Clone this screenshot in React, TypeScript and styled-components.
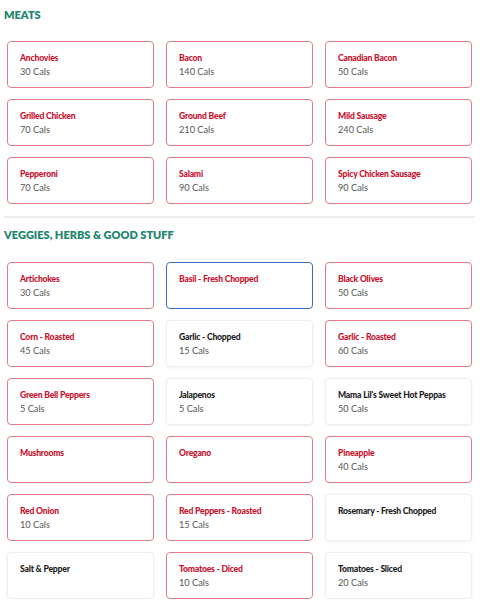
import React from "react";
import styled, { createGlobalStyle } from "styled-components";

const Global = createGlobalStyle`
  html, body { margin: 0; padding: 0; background: #fff; }
  body { font-family: Lato, "Noto Sans", sans-serif; }
`;

type State = "on" | "focus" | "off";
type Item = { name: string; cals?: number; state: State };

const meats: Item[] = [
  { name: "Anchovies", cals: 30, state: "on" },
  { name: "Bacon", cals: 140, state: "on" },
  { name: "Canadian Bacon", cals: 50, state: "on" },
  { name: "Grilled Chicken", cals: 70, state: "on" },
  { name: "Ground Beef", cals: 210, state: "on" },
  { name: "Mild Sausage", cals: 240, state: "on" },
  { name: "Pepperoni", cals: 70, state: "on" },
  { name: "Salami", cals: 90, state: "on" },
  { name: "Spicy Chicken Sausage", cals: 90, state: "on" },
];

const veggies: Item[] = [
  { name: "Artichokes", cals: 30, state: "on" },
  { name: "Basil - Fresh Chopped", state: "focus" },
  { name: "Black Olives", cals: 50, state: "on" },
  { name: "Corn - Roasted", cals: 45, state: "on" },
  { name: "Garlic - Chopped", cals: 15, state: "off" },
  { name: "Garlic - Roasted", cals: 60, state: "on" },
  { name: "Green Bell Peppers", cals: 5, state: "on" },
  { name: "Jalapenos", cals: 5, state: "off" },
  { name: "Mama Lil's Sweet Hot Peppas", cals: 50, state: "off" },
  { name: "Mushrooms", state: "on" },
  { name: "Oregano", state: "on" },
  { name: "Pineapple", cals: 40, state: "on" },
  { name: "Red Onion", cals: 10, state: "on" },
  { name: "Red Peppers - Roasted", cals: 15, state: "on" },
  { name: "Rosemary - Fresh Chopped", state: "off" },
  { name: "Salt & Pepper", state: "off" },
  { name: "Tomatoes - Diced", cals: 10, state: "on" },
  { name: "Tomatoes - Sliced", cals: 20, state: "off" },
];

const Page = styled.div`
  padding: 0 8px 0 7px;
`;

const Heading = styled.h2`
  margin: 0 0 0 -3px;
  padding-top: 8px;
  height: 41px;
  box-sizing: border-box;
  font-size: 11px;
  font-weight: 800;
  color: #21856f;
  line-height: 14px;
`;

const SecondHeading = styled(Heading)`
  padding-top: 10px;
  height: 44px;
`;

const Grid = styled.div`
  display: grid;
  grid-template-columns: repeat(3, 147px);
  column-gap: 12px;
  row-gap: 11px;
`;

const Divider = styled.hr`
  margin: 12px -3px 0 -3px;
  border: none;
  border-top: 2px solid #ededed;
`;

const borderFor = (s: State) =>
  s === "on" ? "#e07d89" : s === "focus" ? "#3a6cc6" : "#efefef";

const Card = styled.div<{ $state: State }>`
  box-sizing: border-box;
  height: 47px;
  border: 1px solid ${(p) => borderFor(p.$state)};
  border-radius: 4px;
  padding: 10px 12px 0 12px;
  background: #fff;
  box-shadow: ${(p) => (p.$state === "off" ? "0 1px 3px rgba(0,0,0,0.06)" : "none")};
`;

const Name = styled.div<{ $state: State }>`
  font-size: 8.6px;
  font-weight: 900;
  letter-spacing: -0.2px;
  line-height: 13px;
  color: ${(p) => (p.$state === "off" ? "#1c1c1c" : "#c8102e")};
  white-space: nowrap;
`;

const Cals = styled.div`
  font-size: 9.2px;
  line-height: 13px;
  color: #555;
`;

const Tile = ({ item }: { item: Item }) => (
  <Card $state={item.state}>
    <Name $state={item.state}>{item.name}</Name>
    {item.cals !== undefined && <Cals>{item.cals} Cals</Cals>}
  </Card>
);

export default function App() {
  return (
    <Page>
      <Global />
      <Heading>MEATS</Heading>
      <Grid>
        {meats.map((m) => (
          <Tile key={m.name} item={m} />
        ))}
      </Grid>
      <Divider />
      <SecondHeading>VEGGIES, HERBS &amp; GOOD STUFF</SecondHeading>
      <Grid>
        {veggies.map((m) => (
          <Tile key={m.name} item={m} />
        ))}
      </Grid>
    </Page>
  );
}
